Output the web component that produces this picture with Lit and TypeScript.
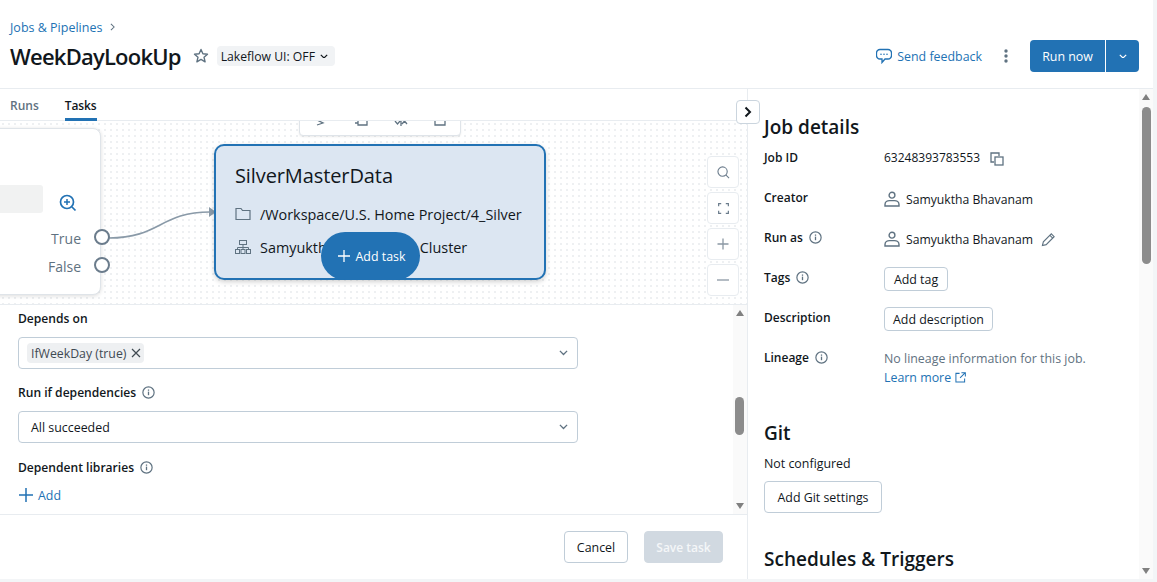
import { LitElement, html, css } from "lit";
import { customElement } from "lit/decorators.js";

const info = html`<svg class="info" viewBox="0 0 12 12" width="13" height="13"><circle cx="6" cy="6" r="5.2" fill="none" stroke="#5f7281" stroke-width="1.1"/><rect x="5.4" y="5.2" width="1.2" height="3.3" fill="#5f7281"/><rect x="5.4" y="3.2" width="1.2" height="1.2" fill="#5f7281"/></svg>`;
const user = html`<svg viewBox="0 0 16 16" width="16" height="16"><circle cx="8" cy="4.2" r="2.9" fill="none" stroke="#5f7281" stroke-width="1.4"/><path d="M1 15v-1.6C1 11 3.2 9.6 5.6 9.6h4.8c2.400 0 4.600 1.400 4.600 3.800V15z" fill="none" stroke="#5f7281" stroke-width="1.4"/></svg>`;
const chev = (w = 10) => html`<svg viewBox="0 0 10 6" width="${w}" height="${w * 0.6}"><path d="M1 1l4 4 4-4" fill="none" stroke="currentColor" stroke-width="1.5"/></svg>`;

@customElement("app-root")
export class AppRoot extends LitElement {
  static styles = css`
    :host { display: block; width: 1157px; height: 582px; background: #f3f5f7; overflow: hidden;
      font-family: "Open Sans", "Noto Sans", sans-serif; font-size: 12.4px; color: #11171c; }
    * { box-sizing: border-box; }
    .page { width: 1153px; height: 579px; background: #fff; display: flex; flex-direction: column; border-radius: 0 0 4px 0; }
    header { height: 89px; flex: none; border-bottom: 1px solid #e8ecf0; padding: 18px 14px 0 10px; display: flex; justify-content: space-between; }
    .crumb { display: flex; align-items: center; gap: 8px; height: 18px; color: #2272b4; font-size: 12.5px; }
    .crumb svg { color: #5f7281; }
    .titlerow { display: flex; align-items: center; height: 40px; }
    h1 { font-size: 22px; font-weight: 600; margin: 0; letter-spacing: -0.78px; }
    .star { margin-left: 12px; }
    .pill { margin-left: 8px; height: 20px; background: #f1f3f5; border-radius: 4px; display: flex; align-items: center; gap: 5px; padding: 0 7px 0 4px; font-size: 12.2px; }
    .actions { display: flex; align-items: center; height: 32px; margin-top: 22px; }
    .fb { display: flex; align-items: center; gap: 5px; color: #2272b4; }
    .kebab { margin: 0 22px 0 22px; display: flex; }
    .run { display: flex; height: 32px; width: 109px; background: #2272b4; color: #fff; border-radius: 4px; }
    .run span { width: 76px; display: flex; align-items: center; justify-content: center; border-right: 1px solid #fff; }
    .run div { flex: 1; display: flex; align-items: center; justify-content: center; }
    .body { flex: 1; display: flex; min-height: 0; }
    .left { width: 748px; flex: none; border-right: 1px solid #e8ecf0; display: flex; flex-direction: column; position: relative; }
    .tabs { height: 32px; flex: none; display: flex; gap: 26px; padding-left: 10px; border-bottom: 1px solid #e8ecf0; font-weight: 600; font-size: 12px; }
    .tab { height: 32px; padding-top: 8px; color: #5f7281; }
    .tab.on { color: #11171c; border-bottom: 3px solid #2272b4; letter-spacing: -0.1px; }
    .collapse { position: absolute; left: 736px; top: 11px; width: 24px; height: 24px; background: #fff; border: 1px solid #cbd5de; border-radius: 4px; display: flex; align-items: center; justify-content: center; z-index: 3; }
    .canvas { height: 184px; flex: none; position: relative; overflow: hidden; border-bottom: 1px solid #e8ecf0; background-color: #fff;
      background-image: radial-gradient(circle, #eef0f2 0.8px, transparent 1px); background-size: 6px 6px; }
    .cond { position: absolute; left: -40px; top: 7px; width: 141px; height: 167px; background: #fff; border: 1px solid #dfe4e9; border-radius: 8px; box-shadow: 0 1px 4px rgba(0,0,0,.14); }
    .gray { position: absolute; left: 0; top: 56px; width: 82px; height: 28px; background: #f1f2f2; border-radius: 3px; }
    .zoomi { position: absolute; left: 98px; top: 65px; }
    .lbl { position: absolute; right: 19px; color: #5f7281; font-size: 14px; }
    .port { position: absolute; left: 133px; width: 16px; height: 16px; background: #fff; border: 2.5px solid #6b7c8c; border-radius: 50%; }
    .wire { position: absolute; left: 0; top: 0; pointer-events: none; }
    .task { position: absolute; left: 214px; top: 23px; width: 332px; height: 136px; background: #dce6f2; border: 2px solid #2272b4; border-radius: 10px; box-shadow: 0 2px 5px rgba(0,0,0,.18); padding: 15px 0 0 19px; }
    .task h2 { font-size: 20px; font-weight: 400; margin: 0; height: 30px; line-height: 30px; letter-spacing: -0.1px; }
    .trow { display: flex; align-items: center; gap: 9px; height: 20px; font-size: 14.4px; white-space: nowrap; }
    .trow svg { flex: none; }
    .addtask { position: absolute; left: 321px; top: 111px; width: 99px; height: 48px; border-radius: 24px; background: #2272b4; color: #fff; display: flex; align-items: center; justify-content: center; gap: 6px; padding-left: 2px; }
    .tools { position: absolute; left: 299px; top: -20px; width: 162px; height: 35px; background: #fff; border: 1px solid #dfe4e9; border-radius: 4px; box-shadow: 0 1px 2px rgba(0,0,0,.08); }
    .tools svg { position: absolute; top: 18px; }
    .ctrls { position: absolute; left: 707px; top: 35px; display: flex; flex-direction: column; gap: 4px; }
    .ctrl { width: 32px; height: 32px; background: #fff; border: 1px solid #e8ecf0; border-radius: 4px; display: flex; align-items: center; justify-content: center; }
    .form { height: 210px; flex: none; border-bottom: 1px solid #e8ecf0; display: flex; position: relative; }
    .fields { flex: 1; padding: 4px 0 0 18px; }
    .flabel { font-weight: 600; height: 18px; display: flex; align-items: center; gap: 6px; font-size: 12.1px; }
    .select { width: 560px; height: 32px; border: 1px solid #c0cdd8; border-radius: 4px; display: flex; align-items: center; justify-content: space-between; padding: 0 9px 0 12px; color: #5f7281; margin-top: 10px; }
    .select b { font-weight: 400; color: #11171c; }
    .chip { background: #eef0f2; border-radius: 4px; height: 20px; display: flex; align-items: center; gap: 5px; padding: 0 3px 0 4px; margin-left: -4px; color: #3f4a52; font-size: 12.3px; }
    .add { display: flex; align-items: center; gap: 5px; color: #2272b4; margin-top: 10px; height: 18px; padding-left: 1px; }
    .sb { width: 14px; flex: none; background: #fafafa; position: relative; }
    .thumb { position: absolute; background: #8c8c8c; border-radius: 5px; }
    .up, .dn { position: absolute; left: 2.5px; width: 0; height: 0; border-left: 4.5px solid transparent; border-right: 4.5px solid transparent; }
    .up { top: 5px; border-bottom: 6px solid #808080; }
    .dn { bottom: 5px; border-top: 6px solid #808080; }
    .foot { flex: 1; display: flex; justify-content: flex-end; align-items: flex-start; gap: 16px; padding: 16px 24px 0 0; }
    .btn { height: 32px; border: 1px solid #c0cdd8; border-radius: 4px; display: flex; align-items: center; justify-content: center; background: #fff; white-space: nowrap; }
    .save { background: #d1d9e1; border-color: #d1d9e1; color: #f4f6f8; font-weight: 600; font-size: 12px; }
    .right { flex: 1; display: flex; min-width: 0; }
    .panel { flex: 1; padding: 25px 0 0 16px; overflow: hidden; }
    h3 { font-size: 19px; font-weight: 600; margin: 0; height: 26px; line-height: 26px; letter-spacing: 0; }
    .dl { display: grid; grid-template-columns: 120px 1fr; grid-auto-rows: 40px; margin-top: 9px; }
    .k { font-weight: 600; display: flex; align-items: flex-start; gap: 6px; height: 18px; font-size: 12px; }
    .k svg { margin-top: 2px; }
    .v { display: flex; align-items: flex-start; }
    .name { display: flex; align-items: center; gap: 6px; height: 18px; margin-top: 1px; font-size: 12.2px; }
    .small { height: 24px; padding: 0 8px; margin-top: -2px; }
    .muted { color: #5f7281; line-height: 20px; }
    .link { color: #2272b4; display: flex; align-items: center; gap: 4px; }
  `;

  render() {
    return html`<div class="page">
      <header>
        <div>
          <div class="crumb">Jobs &amp; Pipelines <svg viewBox="0 0 6 10" width="5" height="8"><path d="M1 1l4 4-4 4" fill="none" stroke="currentColor" stroke-width="1.3"/></svg></div>
          <div class="titlerow">
            <h1>WeekDayLookUp</h1>
            <svg class="star" viewBox="0 0 16 16" width="16" height="16"><path d="M8 1.5l1.900 4.300 4.600.4-3.500 3 1.100 4.600L8 11.400l-4.100 2.400L5 9.200l-3.500-3 4.600-.4z" fill="none" stroke="#5f7281" stroke-width="1.4" stroke-linejoin="round"/></svg>
            <div class="pill">Lakeflow UI: OFF ${chev(8)}</div>
          </div>
        </div>
        <div class="actions">
          <div class="fb"><svg viewBox="0 0 16 16" width="16" height="16"><path d="M4 1.500h8a3.500 3.500 0 0 1 3.500 3.500v2.500a3.500 3.500 0 0 1-3.500 3.500H9l-3 3.500V11H4A3.500 3.500 0 0 1 .5 7.500V5A3.500 3.500 0 0 1 4 1.500z" fill="none" stroke="#2272b4" stroke-width="1.3"/><circle cx="5" cy="6.3" r=".8" fill="#2272b4"/><circle cx="8" cy="6.300" r=".8" fill="#2272b4"/><circle cx="11" cy="6.300" r=".8" fill="#2272b4"/></svg>Send feedback</div>
          <div class="kebab"><svg viewBox="0 0 4 14" width="4" height="14"><circle cx="2" cy="2" r="1.7" fill="#5f7281"/><circle cx="2" cy="7" r="1.7" fill="#5f7281"/><circle cx="2" cy="12" r="1.7" fill="#5f7281"/></svg></div>
          <div class="run"><span>Run now</span><div>${chev(8)}</div></div>
        </div>
      </header>
      <div class="body">
        <div class="left">
          <div class="tabs"><div class="tab">Runs</div><div class="tab on">Tasks</div></div>
          <div class="collapse"><svg viewBox="0 0 8 12" width="8" height="12"><path d="M1.500 1.500L6 6l-4.500 4.500" fill="none" stroke="#11171c" stroke-width="2"/></svg></div>
          <div class="canvas">
            <svg class="wire" width="300" height="184"><path d="M109 117C160 117 160 91 210 91" fill="none" stroke="#8a9aa8" stroke-width="1.7"/><path d="M209 86l7 5-7 5z" fill="#8a9aa8"/></svg>
            <div class="cond">
              <div class="gray"></div>
              <svg class="zoomi" viewBox="0 0 18 18" width="18" height="18"><circle cx="8" cy="8" r="6.500" fill="none" stroke="#2272b4" stroke-width="1.7"/><path d="M13 13l3.500 3.500" stroke="#2272b4" stroke-width="1.7"/><path d="M8 5v6M5 8h6" stroke="#2272b4" stroke-width="1.5"/></svg>
              <div class="lbl" style="top:100px">True</div>
              <div class="lbl" style="top:128px">False</div>
              <div class="port" style="top:100px"></div>
              <div class="port" style="top:128px"></div>
            </div>
            <div class="task">
              <h2>SilverMasterData</h2>
              <div class="trow" style="margin-top:13px"><svg viewBox="0 0 16 14" width="16" height="14"><path d="M1 12.500V1.500h5l1.500 2H15v9z" fill="none" stroke="#5f7281" stroke-width="1.2"/></svg>/Workspace/U.S. Home Project/4_Silver</div>
              <div class="trow" style="margin-top:13px"><svg viewBox="0 0 16 14" width="16" height="14" fill="none" stroke="#5f7281" stroke-width="1"><rect x="4.500" y=".5" width="7" height="4"/><path d="M8 4.500v3M2.500 9.500v-2h11v2M8 7.500v2"/><rect x=".5" y="9.500" width="4" height="4"/><rect x="6" y="9.500" width="4" height="4"/><rect x="11.500" y="9.500" width="4" height="4"/></svg><span>Samyuktha</span><span style="margin-left:76px">Cluster</span></div>
            </div>
            <div class="addtask"><svg viewBox="0 0 12 12" width="12" height="12"><path d="M6 0v12M0 6h12" stroke="#fff" stroke-width="1.3"/></svg>Add task</div>
            <div class="tools">
              <svg viewBox="0 0 12 6" width="12" height="6" style="left:15px"><path d="M2 0l6 3-6 2" fill="none" stroke="#5f7281" stroke-width="1.3"/></svg>
              <svg viewBox="0 0 14 6" width="14" height="6" style="left:54px"><path d="M1 3h3M4 0v5h9V0" fill="none" stroke="#5f7281" stroke-width="1.3"/></svg>
              <svg viewBox="0 0 14 6" width="14" height="6" style="left:94px"><path d="M1 1l2.500 3L6 1M8 4l2.500-3L13 4M7 0v6" fill="none" stroke="#5f7281" stroke-width="1.3"/></svg>
              <svg viewBox="0 0 12 6" width="12" height="6" style="left:134px"><path d="M1 0v5h10V0" fill="none" stroke="#5f7281" stroke-width="1.3"/></svg>
            </div>
            <div class="ctrls">
              <div class="ctrl"><svg viewBox="0 0 14 14" width="13" height="13"><circle cx="6" cy="6" r="5" fill="none" stroke="#6b7c8c" stroke-width="1.2"/><path d="M9.500 9.500L13 13" stroke="#6b7c8c" stroke-width="1.2"/></svg></div>
              <div class="ctrl"><svg viewBox="0 0 12 12" width="11" height="11"><path d="M.7 3.500V.7h2.800M8.500.7h2.800v2.800M11.300 8.500v2.800H8.500M3.500 11.300H.7V8.500" fill="none" stroke="#6b7c8c" stroke-width="1.3"/></svg></div>
              <div class="ctrl"><svg viewBox="0 0 12 12" width="12" height="12"><path d="M6 .5v11M.5 6h11" stroke="#8b98a4" stroke-width="1.3"/></svg></div>
              <div class="ctrl"><svg viewBox="0 0 12 2" width="12" height="2"><path d="M0 1h12" stroke="#8b98a4" stroke-width="1.3"/></svg></div>
            </div>
          </div>
          <div class="form">
            <div class="fields">
              <div class="flabel">Depends on</div>
              <div class="select"><div class="chip">IfWeekDay (true)<svg viewBox="0 0 10 10" width="10" height="10"><path d="M1 1l8 8M9 1L1 9" stroke="#3f4a52" stroke-width="1.2"/></svg></div>${chev(9)}</div>
              <div class="flabel" style="margin-top:14px">Run if dependencies ${info}</div>
              <div class="select" style="margin-top:10px"><b>All succeeded</b>${chev(9)}</div>
              <div class="flabel" style="margin-top:15px">Dependent libraries ${info}</div>
              <div class="add"><svg viewBox="0 0 14 14" width="14" height="14"><path d="M7 0v14M0 7h14" stroke="#2272b4" stroke-width="1.5"/></svg>Add</div>
            </div>
            <div class="sb"><div class="up"></div><div class="thumb" style="left:2px;top:92px;width:9px;height:38px"></div><div class="dn"></div></div>
          </div>
          <div class="foot"><div class="btn" style="width:64px">Cancel</div><div class="btn save" style="width:79px">Save task</div></div>
        </div>
        <div class="right">
          <div class="panel">
            <h3>Job details</h3>
            <div class="dl">
              <div class="k">Job ID</div>
              <div class="v"><span style="height:18px;font-size:12px;line-height:18px">63248393783553</span><svg style="margin:3px 0 0 10px" viewBox="0 0 14 14" width="14" height="14"><path d="M4 10H1V1h8v3" fill="none" stroke="#5f7281" stroke-width="1.3"/><rect x="5" y="5" width="8" height="8" fill="none" stroke="#5f7281" stroke-width="1.3"/></svg></div>
              <div class="k">Creator</div>
              <div class="v"><div class="name">${user}Samyuktha Bhavanam</div></div>
              <div class="k">Run as ${info}</div>
              <div class="v"><div class="name">${user}Samyuktha Bhavanam<svg style="margin-left:2px" viewBox="0 0 16 16" width="15" height="15"><path d="M1.500 14.500l1-4L11 2l3 3-8.500 8.500z" fill="none" stroke="#5f7281" stroke-width="1.2"/><path d="M9.500 3.500l3 3" stroke="#5f7281" stroke-width="1.2"/></svg></div></div>
              <div class="k">Tags ${info}</div>
              <div class="v"><div class="btn small" style="width:64px">Add tag</div></div>
              <div class="k">Description</div>
              <div class="v"><div class="btn small">Add description</div></div>
              <div class="k">Lineage ${info}</div>
              <div class="v" style="flex-direction:column"><div class="muted">No lineage information for this job.</div><div class="link">Learn more <svg viewBox="0 0 12 12" width="11" height="11"><path d="M5 1.500H1V11h9.500V7M7 .7h4.300V5M11 1L5.500 6.500" fill="none" stroke="#2272b4" stroke-width="1.1"/></svg></div></div>
            </div>
            <h3 style="margin-top:31px">Git</h3>
            <div style="margin-top:9px;height:18px;line-height:18px">Not configured</div>
            <div class="btn" style="width:118px;margin-top:8px">Add Git settings</div>
            <h3 style="margin-top:33px">Schedules &amp; Triggers</h3>
          </div>
          <div class="sb"><div class="up"></div><div class="thumb" style="left:3px;top:18px;width:9px;height:157px"></div><div class="dn"></div></div>
        </div>
      </div>
    </div>`;
  }
}
